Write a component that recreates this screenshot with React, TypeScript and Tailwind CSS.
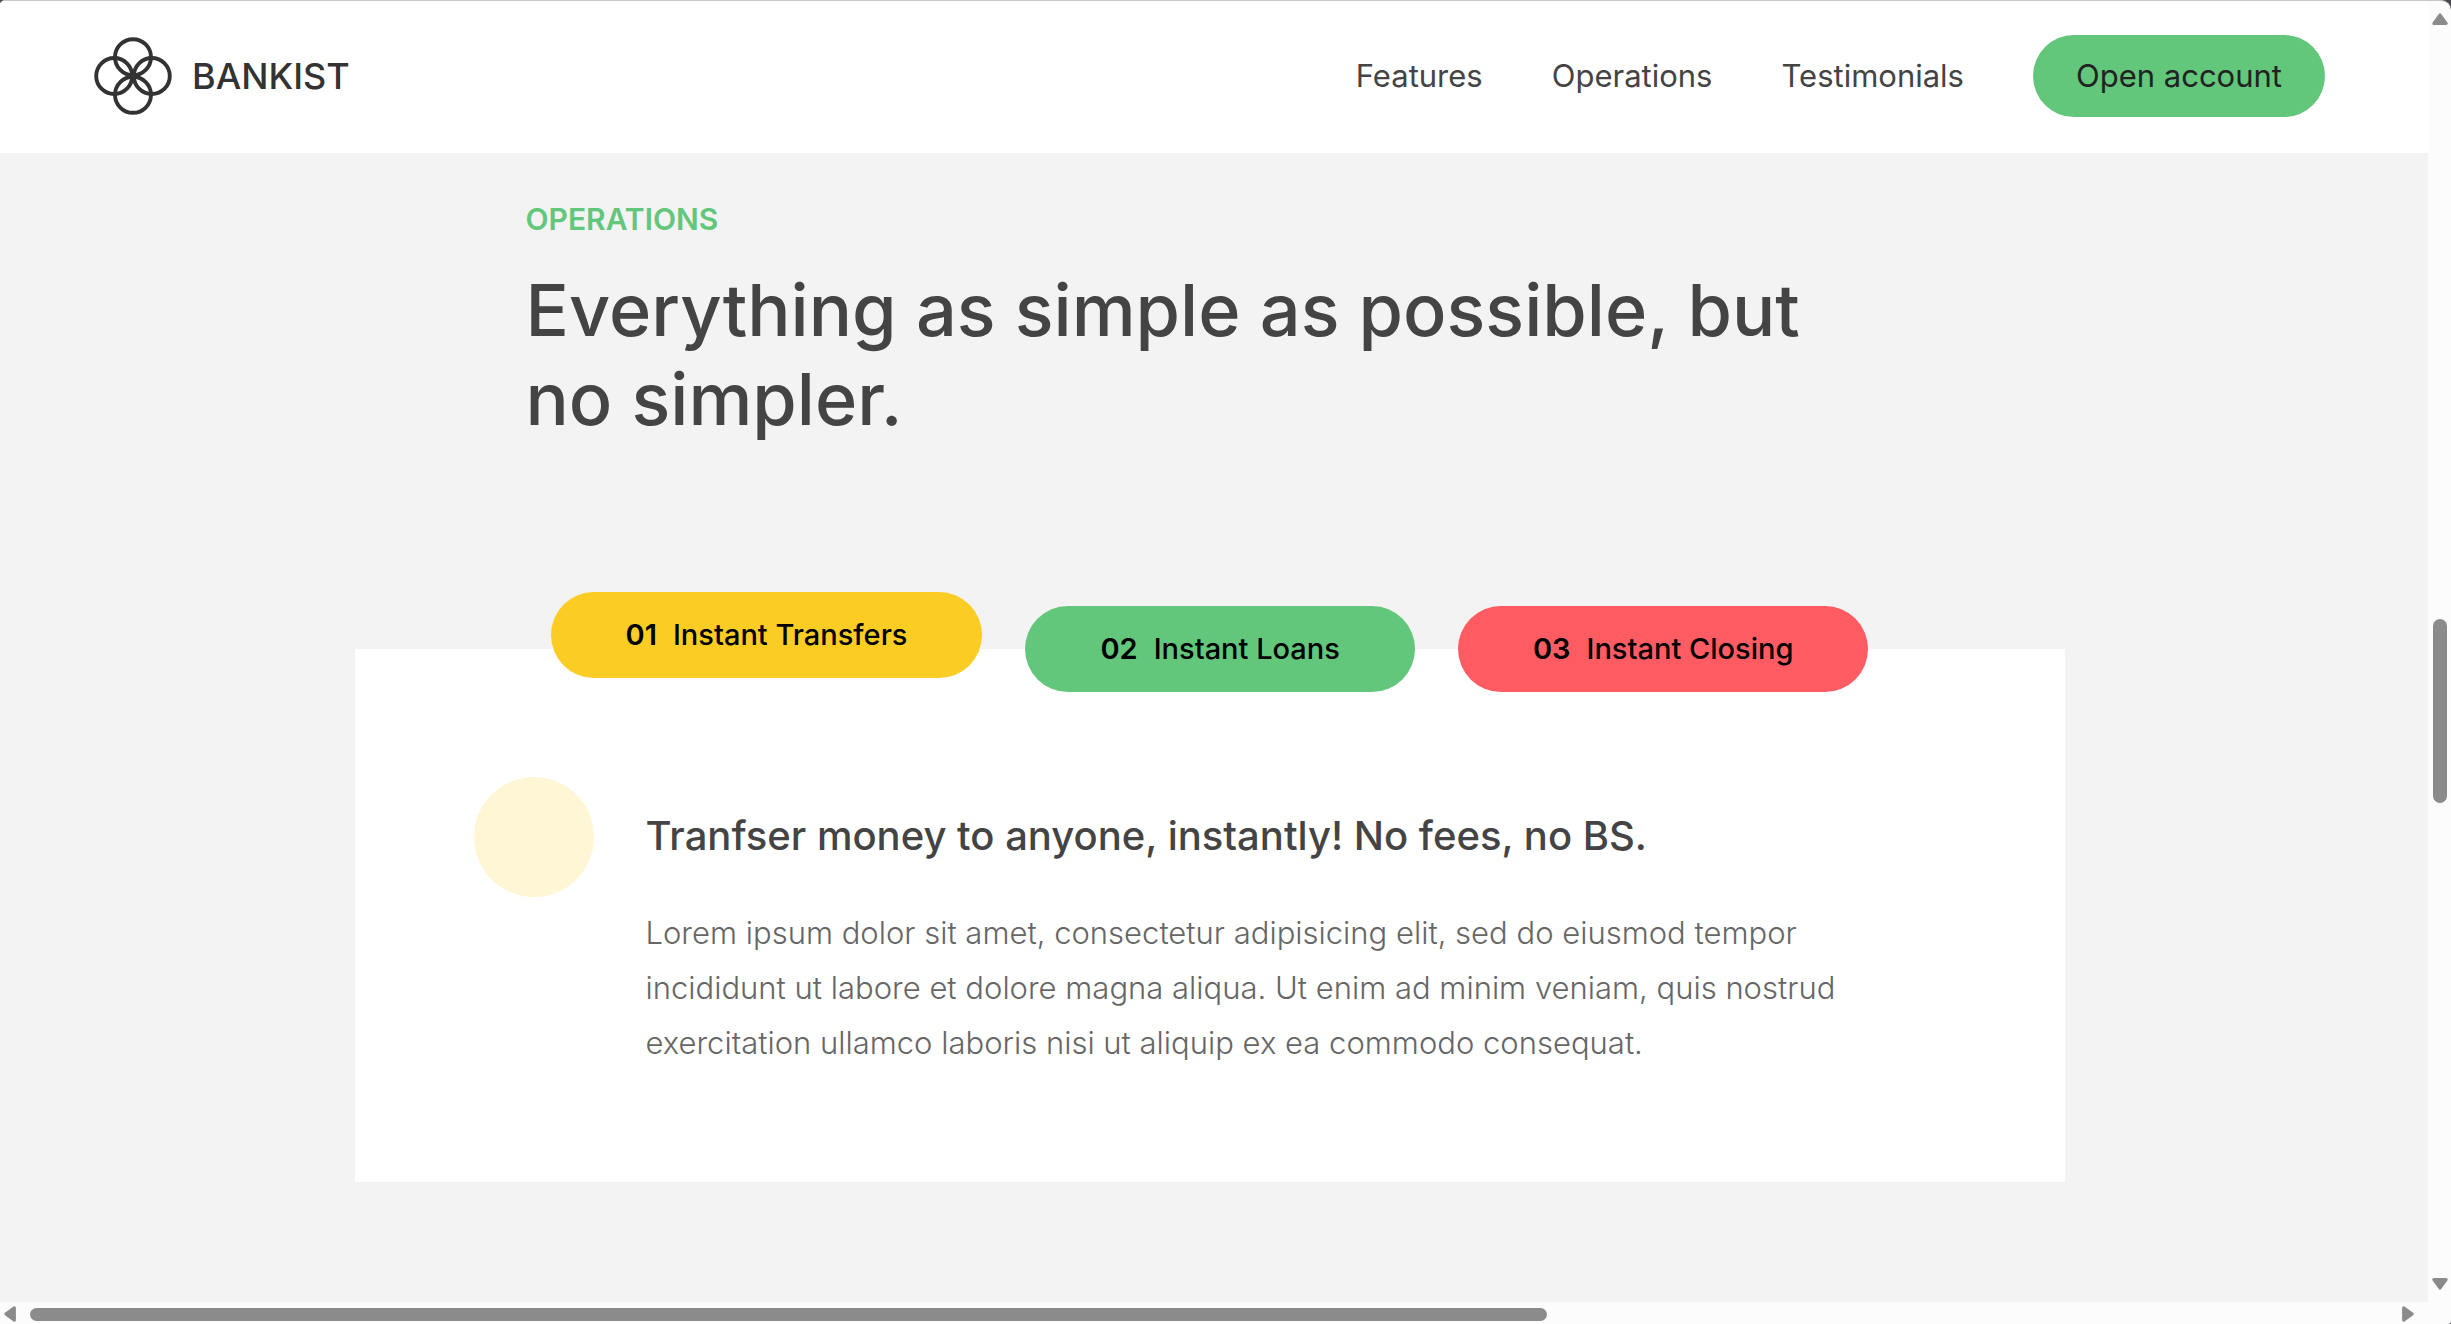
const navLinks = ["Features", "Operations", "Testimonials"];

const tabs = [
  { number: "01", label: "Instant Transfers", style: "bg-[#fbcd24] -translate-y-[14px]" },
  { number: "02", label: "Instant Loans", style: "bg-[#62c67b]" },
  { number: "03", label: "Instant Closing", style: "bg-[#fe5c62]" },
];

function LogoMark() {
  return (
    <svg viewBox="0 0 78 78" className="size-[78px]" fill="none" stroke="#333" strokeWidth="3.9" aria-hidden="true">
      <circle cx="39" cy="20.2" r="18" />
      <circle cx="39" cy="57.8" r="18" />
      <circle cx="20.2" cy="39" r="18" />
      <circle cx="57.8" cy="39" r="18" />
    </svg>
  );
}

function Arrow({ className }: { className: string }) {
  return (
    <svg viewBox="0 0 16 12" className={className} fill="#8b8b8b" stroke="#8b8b8b" strokeWidth="3" strokeLinejoin="round" aria-hidden="true">
      <path d="M8 1.8 14.2 10.4H1.8Z" />
    </svg>
  );
}

function Header() {
  return (
    <header className="flex h-[152px] shrink-0 items-center justify-between bg-white pr-[103px] pb-0.5 pl-[94px]">
      <a href="#top" className="flex items-center gap-5" aria-label="Bankist">
        <LogoMark />
        <span className="text-[36px] font-medium text-[#333]">BANKIST</span>
      </a>
      <nav className="flex items-center gap-[69px] text-[31px] text-[#444]">
        {navLinks.map((link) => (
          <a key={link} href={`#${link.toLowerCase()}`}>
            {link}
          </a>
        ))}
        <button type="button" className="h-[82px] rounded-full bg-[#62c67b] px-[43px] text-[#222]">
          Open account
        </button>
      </nav>
    </header>
  );
}

function Operations() {
  return (
    <section id="operations" className="pt-[46px] pr-[9px]">
      <div className="mx-auto w-full max-w-[1368px]">
        <h2 className="text-[30px] leading-10 font-semibold text-[#62c67b]">OPERATIONS</h2>
        <h3 className="mt-[26px] max-w-[1340px] text-[72px] leading-[89px] font-medium text-[#444]">
          Everything as simple as possible, but no simpler.
        </h3>
      </div>

      <div className="mx-auto mt-[206px] w-full max-w-[1710px] bg-white pb-[112px]">
        <div className="flex -translate-y-1/2 justify-center gap-[43px]" role="tablist">
          {tabs.map((tab, i) => (
            <button
              key={tab.number}
              type="button"
              role="tab"
              aria-selected={i === 0}
              className={`flex h-[86px] items-center gap-4 rounded-full px-[75px] text-[29px] font-medium whitespace-nowrap text-black ${tab.style}`}
            >
              <span className="font-semibold">{tab.number}</span>
              {tab.label}
            </button>
          ))}
        </div>
        <div className="flex gap-[52px] pt-[42px] pr-[150px] pl-[119px]" role="tabpanel">
          <div className="size-[120px] shrink-0 rounded-full bg-[#fff6d6]" />
          <div className="pt-[29px]">
            <h5 className="text-[40px] leading-[60px] font-medium text-[#444]">
              Tranfser money to anyone, instantly! No fees, no BS.
            </h5>
            <p className="mt-[39px] text-[31px] leading-[55px] font-light text-[#666]">
              Lorem ipsum dolor sit amet, consectetur adipisicing elit, sed do eiusmod tempor incididunt ut
              labore et dolore magna aliqua. Ut enim ad minim veniam, quis nostrud exercitation ullamco
              laboris nisi ut aliquip ex ea commodo consequat.
            </p>
          </div>
        </div>
      </div>
    </section>
  );
}

export default function App() {
  return (
    <div className="h-screen bg-[#4a4a50] font-['Inter',sans-serif]">
      <div className="flex h-full flex-col overflow-hidden rounded-tl-[5px] rounded-tr-[10px] rounded-br-[3px] border-t border-[#c6c6c6] bg-[#fcfcfc]">
        <div className="flex min-h-0 flex-1">
          <main className="min-w-0 flex-1 overflow-hidden bg-[#f3f3f3]">
            <Header />
            <Operations />
          </main>
          <div className="flex w-[23px] shrink-0 flex-col items-center pt-3 pb-3 pl-px">
            <Arrow className="h-3 w-4" />
            <div className="grow-[593]" />
            <div className="h-[184px] w-3.5 rounded-full bg-[#8b8b8b]" />
            <div className="grow-[475]" />
            <Arrow className="h-3 w-4 rotate-180" />
          </div>
        </div>
        <div className="flex h-[22px] shrink-0 items-center pt-0.5 pr-[35px] pl-0.5">
          <Arrow className="h-3 w-4 -rotate-90" />
          <div className="ml-3 flex-1">
            <div className="h-[13px] w-[64%] rounded-full bg-[#8b8b8b]" />
          </div>
          <Arrow className="h-3 w-4 rotate-90" />
        </div>
      </div>
    </div>
  );
}
